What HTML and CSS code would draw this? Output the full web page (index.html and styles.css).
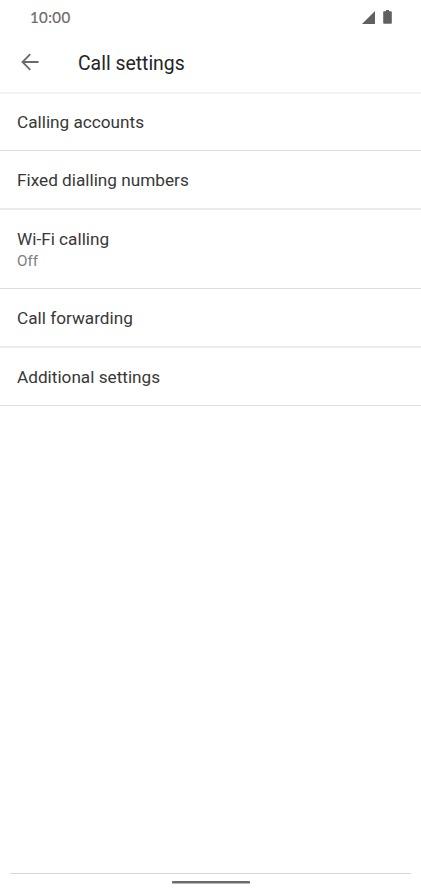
FILE: index.html
```html
<!DOCTYPE html>
<html lang="en">
<head>
<meta charset="utf-8">
<title>Call settings</title>
<link rel="stylesheet" href="styles.css">
</head>
<body>
<div class="status">
  <span class="clock">10:00</span>
  <div class="indicators">
    <svg class="signal" viewBox="0 0 13 13"><path d="M13 0V13H0Z"/></svg>
    <svg class="battery" viewBox="0 0 9 14"><path d="M3 0h3v1.200h2q.8 0 .8.8V13q0 .8-.8.8H1q-.8 0-.8-.8V2q0-.8.8-.8h2z"/></svg>
  </div>
</div>
<header class="bar">
  <svg class="back" viewBox="0 0 18 18"><path d="M17.500 9H1.500M9.300 1.200L1.500 9l7.800 7.800"/></svg>
  <h1>Call settings</h1>
</header>
<main>
  <div class="row first"><span class="title">Calling accounts</span></div>
  <div class="row soft"><span class="title">Fixed dialling numbers</span></div>
  <div class="row tall"><span class="title">Wi-Fi calling</span><span class="sub">Off</span></div>
  <div class="row soft"><span class="title">Call forwarding</span></div>
  <div class="row last"><span class="title">Additional settings</span></div>
</main>
<footer><div class="pill"></div></footer>
</body>
</html>
```
FILE: styles.css
```css
* { box-sizing: border-box; }
body { margin: 0; height: 890px; display: flex; flex-direction: column; background: #fff; font-family: Roboto, sans-serif; color: #383838; overflow: hidden; }
.status { height: 34px; padding: 0 29.500px 0 30px; display: flex; align-items: center; justify-content: space-between; }
.clock { margin-top: -1px; font-family: Lato, sans-serif; font-size: 15px; letter-spacing: .4px; color: #6a6a6a; -webkit-text-stroke: .2px #6a6a6a; }
.indicators { display: flex; align-items: center; gap: 7.500px; fill: #606060; }
.signal { width: 13px; height: 13px; }
.battery { width: 9px; height: 14px; }
.bar { height: 60px; padding-left: 21px; display: flex; align-items: center; border-bottom: 2px solid #f2f2f2; }
.back { width: 18px; height: 18px; margin-top: -2px; fill: none; stroke: #6a6a6a; stroke-width: 1.8; }
h1 { margin: 2px 0 0 39px; font-size: 19.400px; line-height: 24px; font-weight: 400; color: #242426; }
.row { height: 58px; padding: 17px 17px 0; display: flex; flex-direction: column; border-bottom: 1px solid #dedede; }
.first { height: 57px; }
.soft { height: 59px; padding-top: 18px; border-bottom: 2px solid #ebebeb; }
.tall { height: 79px; padding-top: 18px; }
.last { padding-top: 18px; }
.title { font-size: 17.200px; line-height: 22px; }
.sub { font-size: 15.200px; line-height: 23px; color: #808080; }
footer { margin: auto 10px 0; height: 17px; border-top: 1px solid #d8d8d8; padding-top: 7px; }
.pill { width: 78px; height: 3px; margin: 0 auto; border-radius: 1px; background: #6a6a6a; border-bottom: 1px solid #b8b8b8; }
```
